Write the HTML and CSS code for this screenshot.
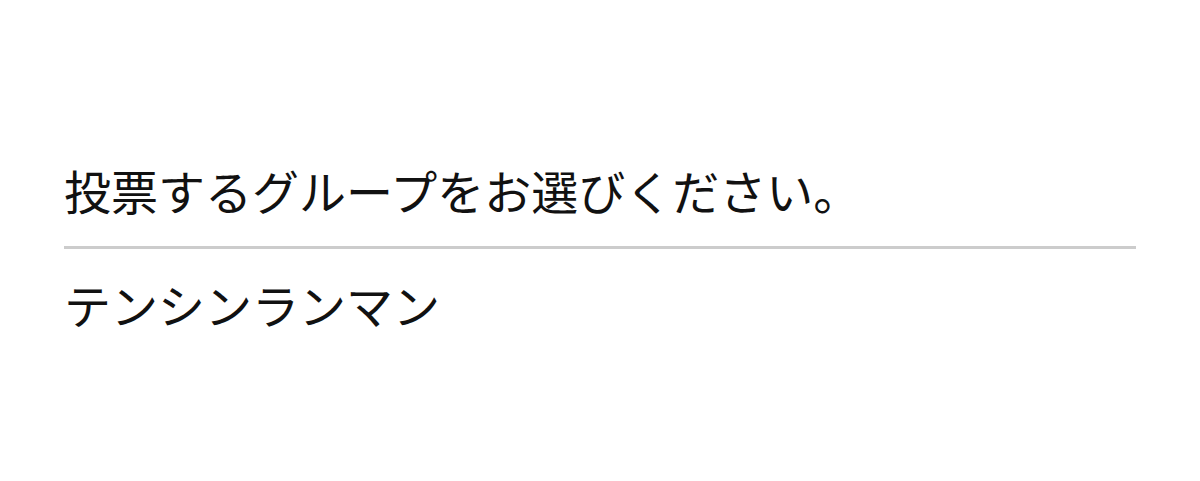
FILE: index.html
```html
<!DOCTYPE html>
<html lang="ja">
<head>
    <meta charset="UTF-8">
    <meta name="viewport" content="width=device-width, initial-scale=1.0">
    <title>投票</title>
    <link rel="stylesheet" href="styles.css">
</head>
<body>
<div class="vote">
    <h2 class="vote_title">投票するグループをお選びください。</h2>
    <ul class="group_list">
        <li>テンシンランマン</li>
    </ul>
</div>
</body>
</html>
```

FILE: styles.css
```css
body {
    margin: 0;
    background: #fff;
    color: #111;
    font-family: "Noto Sans CJK JP", sans-serif;
}
ul {
    list-style: none;
    padding: 0;
    margin: 0;
}

.vote {
    padding: 150px 64px 0;
}
.vote_title {
    margin: 0;
    padding-bottom: 16px;
    font-size: 47px;
    font-weight: 400;
    line-height: 80px;
    border-bottom: 3px solid #ccc;
}
.group_list > li {
    padding-top: 15px;
    font-size: 47px;
    line-height: 80px;
}
```
